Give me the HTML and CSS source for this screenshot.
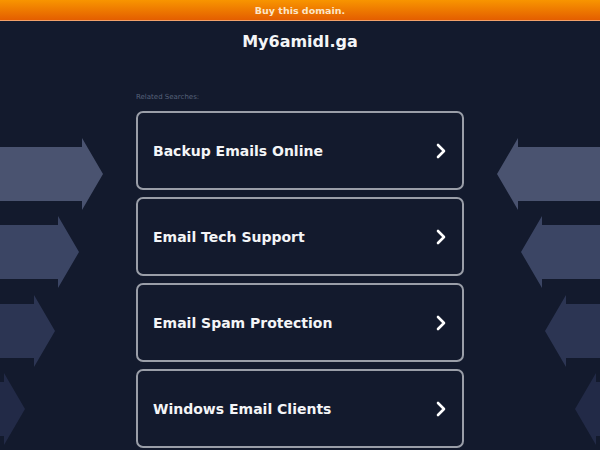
FILE: index.html
```html
<!DOCTYPE html>
<html lang="en">

<head>
  <meta charset="UTF-8">
  <meta name="viewport" content="width=device-width, initial-scale=1.0">
  <title>My6amidl.ga</title>
  <link rel="stylesheet" href="styles.css">
</head>

<body>
  <div class="buy-bar">
    <a href="#" class="buy-link">Buy this domain.</a>
  </div>

  <!-- decorative arrows behind the content -->
  <svg class="bg-arrows" width="600" height="450" viewBox="0 0 600 450">
    <polygon fill="#4a5370" points="0,147 82,147 82,138 103,174 82,210 82,201 0,201" />
    <polygon fill="#3b4564" points="0,225 58,225 58,216 79,252 58,288 58,279 0,279" />
    <polygon fill="#2c3553" points="0,304 34,304 34,295 55,331 34,367 34,358 0,358" />
    <polygon fill="#222a47" points="0,382 4,382 4,373 25,409 4,445 4,436 0,436" />

    <polygon fill="#4a5370" points="600,147 518,147 518,138 497,174 518,210 518,201 600,201" />
    <polygon fill="#3b4564" points="600,225 542,225 542,216 521,252 542,288 542,279 600,279" />
    <polygon fill="#2c3553" points="600,304 566,304 566,295 545,331 566,367 566,358 600,358" />
    <polygon fill="#222a47" points="600,382 596,382 596,373 575,409 596,445 596,436 600,436" />
  </svg>

  <div class="page">
    <h1 class="domain">My6amidl.ga</h1>

    <div class="searches">
      <div class="searches-label">Related Searches:</div>

      <a href="#" class="search-card">
        <span>Backup Emails Online</span>
        <svg class="chev" width="12" height="16" viewBox="0 0 12 16"><polyline points="3,2 9,8 3,14" /></svg>
      </a>
      <a href="#" class="search-card">
        <span>Email Tech Support</span>
        <svg class="chev" width="12" height="16" viewBox="0 0 12 16"><polyline points="3,2 9,8 3,14" /></svg>
      </a>
      <a href="#" class="search-card">
        <span>Email Spam Protection</span>
        <svg class="chev" width="12" height="16" viewBox="0 0 12 16"><polyline points="3,2 9,8 3,14" /></svg>
      </a>
      <a href="#" class="search-card">
        <span>Windows Email Clients</span>
        <svg class="chev" width="12" height="16" viewBox="0 0 12 16"><polyline points="3,2 9,8 3,14" /></svg>
      </a>
    </div>
  </div>
</body>

</html>
```

FILE: styles.css
```css
html,
body {
  margin: 0;
  padding: 0;
  height: 100%;
  overflow: hidden;
}

body {
  background-color: #131a2d;
  font-family: "DejaVu Sans", "Liberation Sans", sans-serif;
  color: #fff;
  position: relative;
}

.buy-bar {
  height: 20px;
  background: linear-gradient(#f89500, #e45e00);
  border-bottom: 1px solid #f1a06a;
  display: flex;
  align-items: center;
  justify-content: center;
}

.buy-link {
  color: #fbe6c8;
  font-size: 9.5px;
  font-weight: bold;
  text-decoration: none;
}

.bg-arrows {
  position: absolute;
  top: 0;
  left: 0;
  z-index: 0;
}

.page {
  position: relative;
  z-index: 1;
}

.domain {
  margin: 10px 0 0;
  text-align: center;
  font-size: 16px;
  line-height: 22px;
  font-weight: bold;
  color: #f4f5f7;
}

.searches {
  width: 328px;
  margin: 39px auto 0;
}

.searches-label {
  font-size: 7px;
  line-height: 10px;
  color: #566179;
  margin-bottom: 9px;
}

.search-card {
  box-sizing: border-box;
  height: 79px;
  margin-bottom: 7px;
  border: 2px solid #9a9ea8;
  border-radius: 7px;
  padding: 0 15px 0 15px;
  display: flex;
  align-items: center;
  justify-content: space-between;
  color: #f4f5f7;
  text-decoration: none;
  font-size: 14px;
  font-weight: bold;
}

.chev polyline {
  fill: none;
  stroke: #fff;
  stroke-width: 2.6;
  stroke-linecap: round;
  stroke-linejoin: round;
}
```
